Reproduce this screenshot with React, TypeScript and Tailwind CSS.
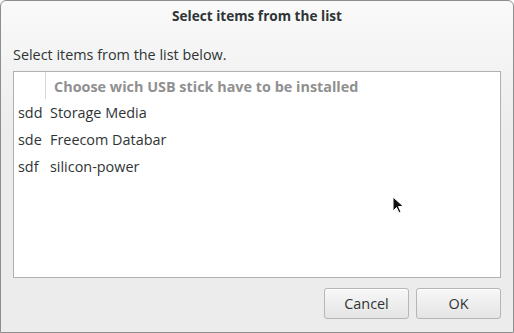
import React from "react";

const rows = [
  { dev: "sdd", name: "Storage Media" },
  { dev: "sde", name: "Freecom Databar" },
  { dev: "sdf", name: "silicon-power" },
];

export default function App() {
  return (
    <div
      className="relative w-[514px] h-[333px] overflow-hidden rounded-t-[6px] border border-[#8e8e8e] bg-gradient-to-b from-[#fafafa] to-[#ececec] to-[40%] text-[#2e3436] text-[14.4px]"
      style={{ fontFamily: '"Open Sans", "DejaVu Sans", sans-serif' }}
    >
      {/* title */}
      <div className="h-[31px] flex items-center justify-center font-bold text-[13.6px] text-[#2e3436]">
        Select items from the list
      </div>

      <div className="h-[39px] pl-[12px] flex items-center pt-[6px] text-[#2e3436]">
        Select items from the list below.
      </div>

      {/* list */}
      <div className="mx-[12px] h-[207px] bg-white border border-[#b0b0b0]">
        <div className="flex h-[27px]">
          <div className="w-[32px] border-r border-[#d8d8d8]" />
          <div className="flex items-center pl-[8px] pt-[2px] font-bold text-[#909090]">
            Choose wich USB stick have to be installed
          </div>
        </div>
        {rows.map((r) => (
          <div key={r.dev} className="flex h-[27px] items-center">
            <div className="w-[36px] pl-[4px]">{r.dev}</div>
            <div>{r.name}</div>
          </div>
        ))}
      </div>

      {/* buttons */}
      <div className="flex justify-end gap-[7px] pr-[12px] pt-[10px]">
        {["Cancel", "OK"].map((b) => (
          <button
            key={b}
            className="w-[85px] h-[31px] rounded-[3px] border border-[#b6b6b6] bg-gradient-to-b from-[#f8f8f8] to-[#e4e4e4] text-[#2e3436] shadow-[inset_0_1px_0_#ffffff]"
          >
            {b}
          </button>
        ))}
      </div>

      {/* mouse pointer */}
      <svg
        className="absolute left-[391px] top-[195px]"
        width="14"
        height="20"
        viewBox="0 0 14 20"
      >
        <path
          d="M1 1 L1 15 L4.5 11.5 L7 17 L9 16 L6.5 10.5 L11.5 10.5 Z"
          fill="#111"
          stroke="#fff"
          strokeWidth="1"
          strokeLinejoin="round"
        />
      </svg>
    </div>
  );
}
